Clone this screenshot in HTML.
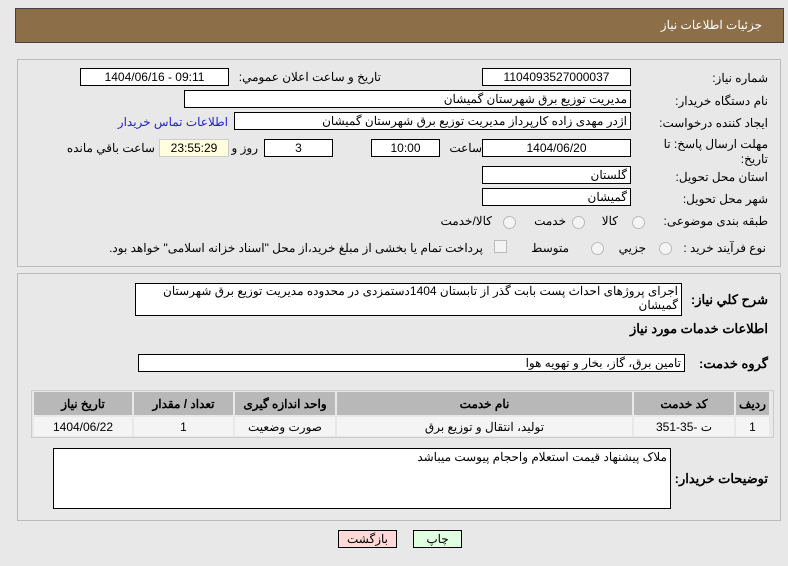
<!DOCTYPE html>
<html><head><meta charset="utf-8"><style>
body{margin:0;width:788px;height:566px;background:#e8e8e8;font-family:"Liberation Sans","Noto Sans CJK SC",sans-serif;font-size:12px;color:#000;position:relative;overflow:hidden}
.a{position:absolute}
.box{position:absolute;background:#fff;border:1px solid #000;box-sizing:border-box;text-align:center;line-height:16px;font-size:12px;white-space:nowrap;overflow:hidden}
.l{position:absolute;direction:rtl;white-space:nowrap;font-size:12px}
.r{position:absolute;width:11px;height:11px;border-radius:50%;border:1px solid #bbb;background:#f4f4f4}
table{border-collapse:separate;border-spacing:2px}
td{text-align:center;font-size:12px}
</style></head><body>
<div class="a" style="left:15px;top:8px;width:769px;height:35px;background:#8c6f48;border:1px solid #444;box-sizing:border-box"></div>
<div class="l" style="right:26px;top:18px;color:#fff">جزئیات اطلاعات نیاز</div>

<div class="a" style="left:17px;top:59px;width:764px;height:208px;border:1px solid #bbb;box-sizing:border-box"></div>
<div class="l" style="right:20px;top:71px">شماره نیاز:</div>
<div class="box" style="left:482px;top:68px;width:149px;height:18px">1104093527000037</div>
<div class="l" style="right:407px;top:70px">تاریخ و ساعت اعلان عمومي:</div>
<div class="box" style="left:80px;top:68px;width:149px;height:18px">1404/06/16 - 09:11</div>
<div class="l" style="right:20px;top:94px">نام دستگاه خریدار:</div>
<div class="box" style="left:184px;top:90px;width:447px;height:18px;text-align:right;padding-right:3px">مدیریت توزیع برق شهرستان گمیشان</div>
<div class="l" style="right:20px;top:116px">ایجاد کننده درخواست:</div>
<div class="box" style="left:234px;top:112px;width:397px;height:18px;text-align:right;padding-right:3px">اژدر مهدی زاده کارپرداز مدیریت توزیع برق شهرستان گمیشان</div>
<div class="l" style="right:560px;top:115px;color:#2222cc">اطلاعات تماس خریدار</div>
<div class="l" style="right:20px;top:137px;line-height:15px;text-align:right">مهلت ارسال پاسخ: تا<br>تاریخ:</div>
<div class="box" style="left:482px;top:139px;width:149px;height:18px">1404/06/20</div>
<div class="l" style="right:306px;top:141px">ساعت</div>
<div class="box" style="left:371px;top:139px;width:69px;height:18px">10:00</div>
<div class="box" style="left:264px;top:139px;width:69px;height:18px">3</div>
<div class="l" style="right:530px;top:141px">روز و</div>
<div class="box" style="left:159px;top:139px;width:70px;height:18px;background:#ffffe0;border-color:#ccc">23:55:29</div>
<div class="l" style="right:633px;top:141px">ساعت باقي مانده</div>
<div class="l" style="right:20px;top:170px">استان محل تحویل:</div>
<div class="box" style="left:482px;top:166px;width:149px;height:18px;text-align:right;padding-right:3px">گلستان</div>
<div class="l" style="right:20px;top:192px">شهر محل تحویل:</div>
<div class="box" style="left:482px;top:188px;width:149px;height:18px;text-align:right;padding-right:3px">گمیشان</div>
<div class="l" style="right:20px;top:214px">طبقه بندی موضوعی:</div>
<div class="r" style="left:632px;top:216px"></div><div class="l" style="right:170px;top:214px">کالا</div>
<div class="r" style="left:572px;top:216px"></div><div class="l" style="right:222px;top:214px">خدمت</div>
<div class="r" style="left:503px;top:216px"></div><div class="l" style="right:296px;top:214px">کالا/خدمت</div>
<div class="l" style="right:22px;top:241px">نوع فرآیند خرید :</div>
<div class="r" style="left:659px;top:242px"></div><div class="l" style="right:142px;top:241px">جزیي</div>
<div class="r" style="left:591px;top:242px"></div><div class="l" style="right:219px;top:241px">متوسط</div>
<div class="a" style="left:494px;top:240px;width:11px;height:11px;border:1px solid #bbb;background:#f4f4f4"></div>
<div class="l" style="right:305px;top:241px">پرداخت تمام یا بخشی از مبلغ خرید،از محل "اسناد خزانه اسلامی" خواهد بود.</div>

<div class="a" style="left:17px;top:273px;width:764px;height:248px;border:1px solid #bbb;box-sizing:border-box"></div>
<div class="l" style="right:20px;top:292px;font-weight:bold;font-size:13px">شرح کلي نیاز:</div>
<div class="box" style="left:135px;top:283px;width:547px;height:33px;text-align:right;padding:0 3px;white-space:normal;direction:rtl;line-height:14px">اجرای پروژهای احداث پست بابت گذر از تابستان 1404دستمزدی  در محدوده مدیریت توزیع برق شهرستان گمیشان</div>
<div class="l" style="right:20px;top:321px;font-weight:bold;font-size:13px">اطلاعات خدمات مورد نیاز</div>
<div class="l" style="right:20px;top:356px;font-weight:bold;font-size:13px">گروه خدمت:</div>
<div class="box" style="left:138px;top:354px;width:547px;height:18px;text-align:right;padding-right:3px">تامین برق، گاز، بخار و تهویه هوا</div>
<div class="a" style="left:31px;top:390px;width:743px;height:48px;border:1px solid #ccc;box-sizing:border-box;background:#e8e8e8">
<table style="width:739px;margin:-1px 0 0 0;direction:rtl">
<tr style="height:23px;background:#b8b8b8;font-weight:bold"><td style="width:31px">ردیف</td><td style="width:98px">کد خدمت</td><td style="width:293px">نام خدمت</td><td style="width:98px">واحد اندازه گیری</td><td style="width:97px">تعداد / مقدار</td><td>تاریخ نیاز</td></tr>
<tr style="height:19px;background:#f4f4f4"><td>1</td><td>ت -35-351</td><td>تولید، انتقال و توزیع برق</td><td>صورت وضعیت</td><td>1</td><td>1404/06/22</td></tr>
</table></div>
<div class="l" style="right:20px;top:471px;font-weight:bold;font-size:13px">توضیحات خریدار:</div>
<div class="box" style="left:53px;top:448px;width:618px;height:61px;text-align:right;padding-right:3px;direction:rtl">ملاک پیشنهاد قیمت استعلام واحجام پیوست میباشد</div>
<div class="box" style="left:338px;top:530px;width:59px;height:18px;background:#ffd8d8">بازگشت</div>
<div class="box" style="left:413px;top:530px;width:49px;height:18px;background:#e0ffe0">چاپ</div>
</body></html>
